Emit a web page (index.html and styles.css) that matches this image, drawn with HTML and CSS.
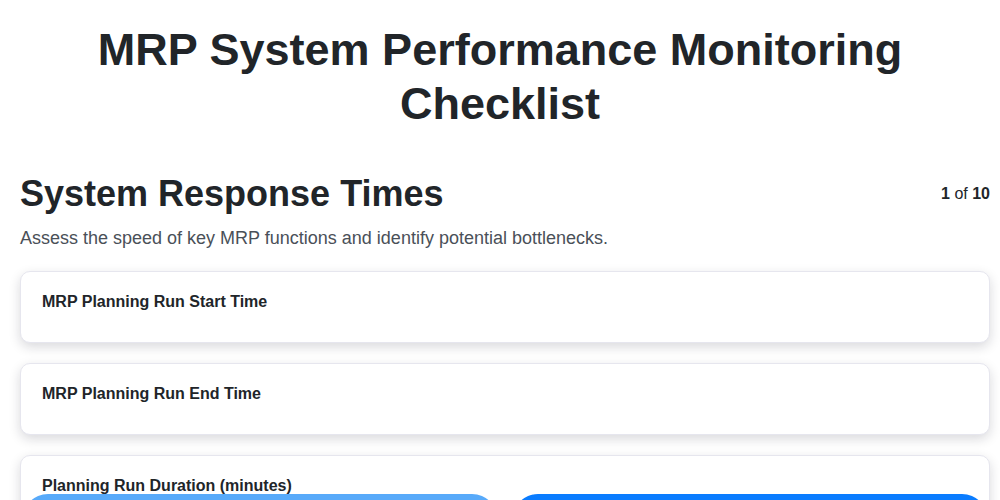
FILE: index.html
```html
<!DOCTYPE html>
<html lang="en">
<head>
<meta charset="utf-8">
<title>MRP System Performance Monitoring Checklist</title>
<link rel="stylesheet" href="styles.css">
</head>
<body>
<header class="header">
  <h1 class="page-title">MRP System Performance Monitoring Checklist</h1>
</header>
<main class="page">
  <section class="section">
    <div class="section-head">
      <h2 class="section-title">System Response Times</h2>
      <div class="progress"><b>1</b> of <b>10</b></div>
    </div>
    <p class="section-desc">Assess the speed of key MRP functions and identify potential bottlenecks.</p>
    <div class="items">
      <div class="card"><div class="card-label">MRP Planning Run Start Time</div></div>
      <div class="card"><div class="card-label">MRP Planning Run End Time</div></div>
      <div class="card"><div class="card-label">Planning Run Duration (minutes)</div></div>
      <div class="card"><div class="card-label">Material Requirements Calculation Time</div></div>
    </div>
  </section>
</main>
<footer class="nav">
  <button class="btn btn-prev" type="button">Previous</button>
  <button class="btn btn-next" type="button">Next</button>
</footer>
</body>
</html>
```
FILE: styles.css
```css
* { box-sizing: border-box; }
html, body { margin: 0; padding: 0; background: #ffffff; }
body {
  font-family: "Liberation Sans", Arial, Helvetica, sans-serif;
  color: #212529;
}
.header {
  padding: 23px 20px 0;
}
.page-title {
  margin: 0 auto;
  max-width: 860px;
  text-align: center;
  font-size: 45px;
  line-height: 1.2;
  font-weight: 700;
  color: #212529;
}
.page {
  padding: 41px 10px 120px 20px;
}
.section-head {
  display: flex;
  justify-content: space-between;
  align-items: center;
}
.section-title {
  margin: 0;
  font-size: 36px;
  line-height: 1.2;
  font-weight: 700;
}
.progress {
  font-size: 16px;
  color: #212529;
}
.progress b { font-weight: 700; }
.section-desc {
  margin: 13px 0 0;
  font-size: 18px;
  color: #4a5058;
}
.items {
  margin-top: 22px;
  display: flex;
  flex-direction: column;
  gap: 20px;
}
.card {
  min-height: 72px;
  padding: 21px 21px 19px;
  background: #fff;
  border: 1px solid #e6e6ee;
  border-radius: 10px;
  box-shadow: 0 4px 12px rgba(20, 20, 40, 0.16);
}
.card-label {
  font-size: 16px;
  font-weight: 700;
  color: #212529;
}
.nav {
  position: fixed;
  left: 22px;
  right: 12px;
  top: 494px;
  display: grid;
  grid-template-columns: 1fr 1fr;
  gap: 14px;
}
.btn {
  height: 52px;
  border: none;
  border-radius: 26px;
  color: #fff;
  font-family: inherit;
  font-size: 17px;
  font-weight: 700;
}
.btn-prev { background: #58aafa; }
.btn-next { background: #0a7cff; }
```
